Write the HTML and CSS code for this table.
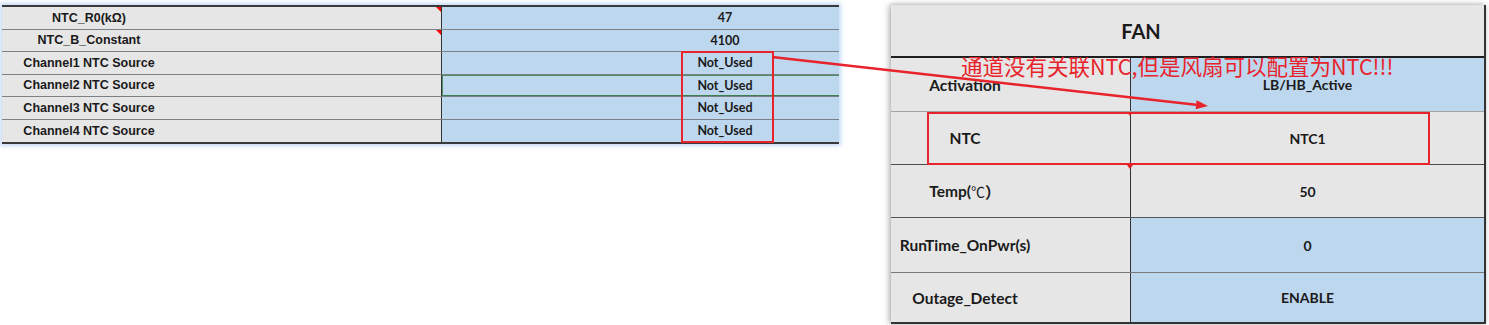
FILE: index.html
```html
<!DOCTYPE html>
<html>
<head>
<meta charset="utf-8">
<link rel="stylesheet" href="styles.css">
</head>
<body>
<div class="page">
  <div class="sheet">
    <div class="row"><div class="lab">NTC_R0(kΩ)<span class="note"></span></div><div class="val">47</div></div>
    <div class="row"><div class="lab">NTC_B_Constant<span class="note"></span></div><div class="val">4100</div></div>
    <div class="row"><div class="lab">Channel1 NTC Source</div><div class="val">Not_Used</div></div>
    <div class="row"><div class="lab">Channel2 NTC Source</div><div class="val selected">Not_Used</div></div>
    <div class="row"><div class="lab">Channel3 NTC Source</div><div class="val">Not_Used</div></div>
    <div class="row"><div class="lab">Channel4 NTC Source</div><div class="val">Not_Used</div></div>
  </div>

  <div class="fan">
    <div class="fan-head">FAN</div>
    <div class="frow r-act"><div class="flab">Activation</div><div class="fval blue">LB/HB_Active</div></div>
    <div class="frow r-ntc"><div class="flab">NTC<span class="fnote"></span></div><div class="fval">NTC1</div></div>
    <div class="frow r-temp"><div class="flab">Temp(<span class="cjk">℃</span>）<span class="fnote"></span></div><div class="fval">50</div></div>
    <div class="frow r-run"><div class="flab">RunTime_OnPwr(s)</div><div class="fval blue">0</div></div>
    <div class="frow r-out"><div class="flab">Outage_Detect</div><div class="fval blue">ENABLE</div></div>
  </div>

  <svg class="marks" width="1489" height="325" viewBox="0 0 1489 325">
    <rect x="682" y="52" width="91" height="90" fill="none" stroke="#e8232b" stroke-width="2"/>
    <rect x="928" y="113" width="501" height="51" fill="none" stroke="#e8232b" stroke-width="2"/>
    <line x1="772" y1="57" x2="1196" y2="104.7" stroke="#e8232b" stroke-width="2.5"/>
    <polygon points="1208,106 1195.6,109.2 1196.6,100.2" fill="#e8232b"/>
  </svg>
  <div class="callout">通道没有关联NTC,但是风扇可以配置为NTC!!!</div>
</div>
</body>
</html>
```
FILE: styles.css
```css
body {
  margin: 0;
  background: #ffffff;
}

.page {
  position: relative;
  width: 1489px;
  height: 325px;
  display: flex;
  align-items: flex-start;
  overflow: hidden;
}

/* left spreadsheet */
.sheet {
  margin: 5px 0 0 2px;
  width: 837px;
  border-top: 2px solid #3a3a3a;
  border-bottom: 2px solid #3a3a3a;
  box-shadow: 0 0 4px 2px rgba(150, 190, 240, 0.55);
}

.row {
  display: grid;
  grid-template-columns: 440px 1fr;
  height: 22.5px;
  box-sizing: border-box;
  border-bottom: 1px solid #7c7f86;
}

.row:last-child {
  border-bottom: 0;
}

.lab {
  position: relative;
  background: #e6e6e6;
  border-right: 1px solid #333333;
  padding-right: 265px;
  display: flex;
  align-items: center;
  justify-content: center;
  font-family: "Liberation Sans", Arial, sans-serif;
  font-weight: 700;
  font-size: 12.5px;
  color: #1a1a1a;
}

.note {
  position: absolute;
  top: 0;
  right: 0;
  width: 0;
  height: 0;
  border-top: 5px solid #ff0000;
  border-left: 5px solid transparent;
}

.val {
  background: #bdd7ee;
  padding-left: 169px;
  display: flex;
  align-items: center;
  justify-content: center;
  font-family: Lato, "Liberation Sans", sans-serif;
  font-weight: 700;
  font-size: 12.5px;
  color: #1a1a1a;
}

.val.selected {
  box-shadow: inset 1px 1px 0 #4f8f5f, inset 0 -1px 0 #3f7f4f;
}

/* right FAN panel */
.fan {
  margin: 5px 0 0 52px;
  width: 595px;
  box-sizing: border-box;
  border-right: 2px solid #333333;
  border-bottom: 2px solid #333333;
  box-shadow: -2px 0 6px rgba(0, 0, 0, 0.28), 0 -1px 4px rgba(0, 0, 0, 0.12);
  font-family: Lato, "Liberation Sans", "Noto Sans CJK SC", sans-serif;
  font-weight: 700;
  color: #1a1a1a;
}

.fan-head {
  height: 51px;
  background: #e6e6e6;
  border-bottom: 2px solid #1e1e1e;
  padding-right: 93px;
  display: flex;
  align-items: center;
  justify-content: center;
  font-size: 20px;
  font-weight: 700;
}

.frow {
  display: grid;
  grid-template-columns: 240px 1fr;
  box-sizing: border-box;
  border-bottom: 1px solid #8c8c8c;
}

.r-act { height: 54px; border-bottom-color: #a3a3a3; }
.r-ntc { height: 53px; border-bottom-color: #4a4a4a; }
.r-temp { height: 53px; border-bottom-color: #555555; }
.r-run { height: 55px; border-bottom-color: #7a7a7a; }
.r-out { height: 49px; border-bottom: 0; }

.flab {
  position: relative;
  background: #e6e6e6;
  border-right: 1px solid #333333;
  padding-right: 91px;
  display: flex;
  align-items: center;
  justify-content: center;
  font-size: 15.5px;
}

.cjk {
  font-family: "Noto Sans CJK SC", sans-serif;
  font-weight: 400;
  font-size: 14px;
}

.fnote {
  position: absolute;
  top: 0;
  right: -3px;
  width: 0;
  height: 0;
  border-top: 4px solid #e02020;
  border-left: 3px solid transparent;
  border-right: 3px solid transparent;
}

.fval {
  background: #e6e6e6;
  display: flex;
  align-items: center;
  justify-content: center;
  font-size: 14px;
}

.fval.blue {
  background: #bdd7ee;
}

/* annotations */
.marks {
  position: absolute;
  left: 0;
  top: 0;
  pointer-events: none;
}

.callout {
  position: absolute;
  left: 961px;
  top: 55px;
  line-height: 21px;
  font-family: "Noto Sans CJK SC", sans-serif;
  font-weight: 400;
  font-size: 21.5px;
  color: #e8232b;
  white-space: nowrap;
}
```
